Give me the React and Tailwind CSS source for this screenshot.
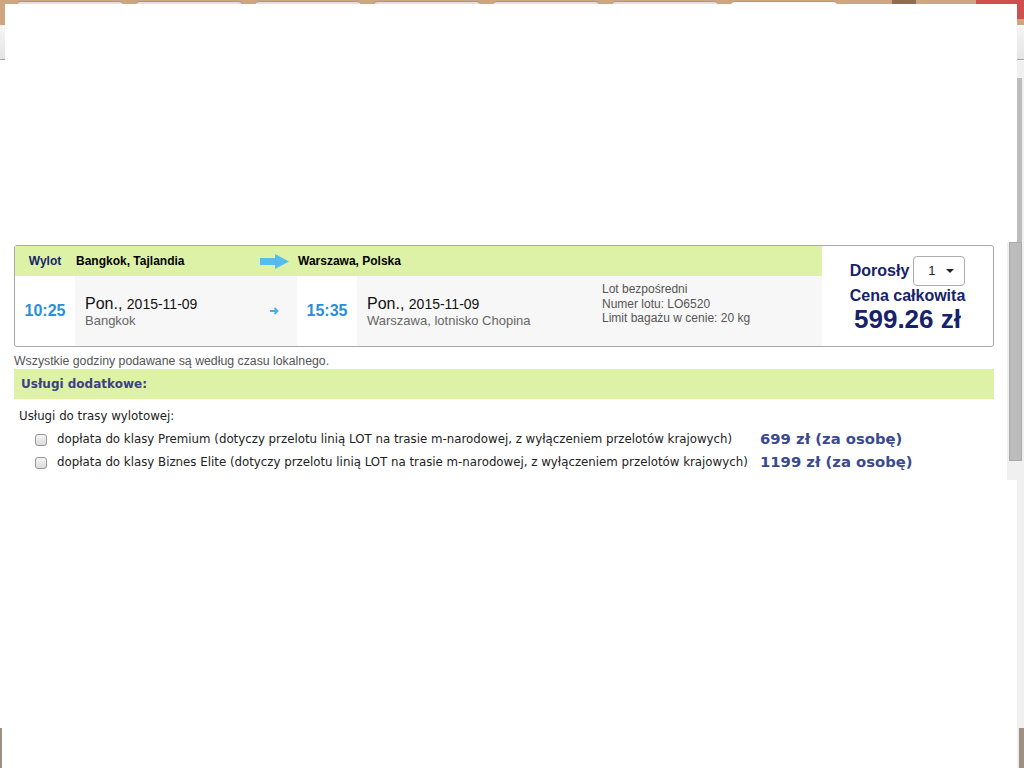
import React from "react";

const navy = "text-[#16236b]";

const tabs = [0, 1, 2, 3, 4, 5, 6];

const extras = [
  {
    label:
      "dopłata do klasy Premium (dotyczy przelotu linią LOT na trasie m-narodowej, z wyłączeniem przelotów krajowych)",
    price: "699 zł (za osobę)",
  },
  {
    label:
      "dopłata do klasy Biznes Elite (dotyczy przelotu linią LOT na trasie m-narodowej, z wyłączeniem przelotów krajowych)",
    price: "1199 zł (za osobę)",
  },
];

const BigArrow = () => (
  <svg width="29" height="15" viewBox="0 0 29 15">
    <path d="M0 4h15V0l14 7.5L15 15v-4H0z" fill="#55bdee" />
  </svg>
);

const SmallArrow = () => (
  <svg width="9" height="8" viewBox="0 0 9 8">
    <path d="M0 4h7M4.5 1l3 3-3 3" stroke="#45b0ea" strokeWidth="1.8" fill="none" />
  </svg>
);

const Browser = () => (
  <>
    {/* window chrome behind the popup */}
    <div className="h-[25px] bg-[#cfa57f] flex relative">
      <div className="flex gap-[9px] pl-[15px] pt-px">
        {tabs.map((t) => (
          <div
            key={t}
            className={
              "w-[110px] h-[26px] rounded-t-[6px] border border-[#a8978a] " +
              (t === 6 ? "bg-white" : "bg-[#e2dfdc]")
            }
          />
        ))}
      </div>
      <div className="absolute left-[892px] top-0 w-[24px] h-[8px] bg-[#8f6d51]" />
      <div className="absolute left-[976px] top-0 w-[48px] h-[19px] bg-[#cf4f4f]" />
    </div>
    <div className="h-[35px] bg-gradient-to-b from-[#f6f6f6] to-[#e4e4e4] border-b border-[#a4a4a4]" />
    <div className="absolute right-0 top-[61px] w-[7px] h-[707px] bg-[#f0f0f0]" />
    <div className="absolute left-[1017px] top-[78px] w-[5px] h-[164px] bg-[#bcbcbc]" />
    <div className="absolute right-0 top-[728px] w-[5px] h-[40px] bg-[#9c8f84]" />
    <div className="absolute left-0 top-[728px] w-[2px] h-[40px] bg-[#9c8f84]" />
  </>
);

const FlightCard = () => (
  <div className="w-[980px] border border-[#a8a8a8] rounded-[3px] flex font-['Liberation_Sans',Arial,sans-serif]">
    <div className="w-[807px] flex flex-col">
      {/* header */}
      <div className="h-[30px] bg-[#ddf2a6] flex items-center text-[12px] font-bold text-black">
        <div className={"w-[60px] text-center " + navy}>Wylot</div>
        <div className="w-[222px] flex items-center justify-between pl-px pr-[8px]">
          <span>Bangkok, Tajlandia</span>
          <BigArrow />
        </div>
        <div className="pl-px">Warszawa, Polska</div>
      </div>
      {/* body */}
      <div className="h-[70px] flex">
        <div className="w-[60px] flex items-center justify-center text-[16px] font-bold text-[#2a8fd9]">
          10:25
        </div>
        <div className="w-[222px] bg-[#f7f7f7] flex items-center justify-between pl-[10px] pr-[18px]">
          <div className="pt-px">
            <div className="leading-[18px] text-[#111]">
              <span className="text-[16px]">Pon.,</span>{" "}
              <span className="text-[14px]">2015-11-09</span>
            </div>
            <div className="leading-[16px] text-[13px] text-[#666]">Bangkok</div>
          </div>
          <SmallArrow />
        </div>
        <div className="w-[60px] flex items-center justify-center text-[16px] font-bold text-[#2a8fd9]">
          15:35
        </div>
        <div className="flex-1 bg-[#f7f7f7] flex pl-[10px]">
          <div className="w-[235px] flex items-center">
            <div className="pt-px">
              <div className="leading-[18px] text-[#111]">
                <span className="text-[16px]">Pon.,</span>{" "}
                <span className="text-[14px]">2015-11-09</span>
              </div>
              <div className="leading-[16px] text-[13px] text-[#666]">
                Warszawa, lotnisko Chopina
              </div>
            </div>
          </div>
          <div className="pt-[6px] text-[12px] leading-[14.5px] text-[#555]">
            <div>Lot bezpośredni</div>
            <div>Numer lotu: LO6520</div>
            <div>Limit bagażu w cenie: 20 kg</div>
          </div>
        </div>
      </div>
    </div>
    {/* price */}
    <div className={"flex-1 flex flex-col items-center pt-[10px] font-bold " + navy}>
      <div className="flex items-center gap-[4px]">
        <span className="text-[16px]">Dorosły</span>
        <div className="w-[52px] h-[30px] border border-[#adadad] rounded-[4px] flex items-center pl-[14px] gap-[10px] text-[13px] font-normal text-[#222]">
          <span>1</span>
          <svg width="8" height="4" viewBox="0 0 8 4">
            <path d="M0 0h8L4 4z" fill="#222" />
          </svg>
        </div>
      </div>
      <div className="text-[16px] leading-[18px] mt-[1px]">Cena całkowita</div>
      <div className="text-[26px] leading-[28px]">599.26 zł</div>
    </div>
  </div>
);

export default function App() {
  return (
    <div className="relative w-[1024px] h-[768px] overflow-hidden bg-white">
      <Browser />
      {/* popup */}
      <div className="absolute left-[5px] top-[4px] w-[1012px] h-[764px] bg-white pl-[9px] pt-[241px]">
        <FlightCard />
        <div className="mt-[7px] text-[12.3px] leading-[14px] text-[#555] font-['Liberation_Sans',Arial,sans-serif]">
          Wszystkie godziny podawane są według czasu lokalnego.
        </div>
        <div className="mt-px w-[980px] h-[30px] bg-[#ddf2a6] flex items-center pl-[7px] text-[12px] font-bold text-[#3c3f86] font-['DejaVu_Sans',Verdana,sans-serif]">
          Usługi dodatkowe:
        </div>
        <div className="font-['DejaVu_Sans',Verdana,sans-serif] text-[#222]">
          <div className="mt-[10px] pl-[5px] text-[11.8px] leading-[14px]">Usługi do trasy wylotowej:</div>
          <div className="mt-[5px]">
            {extras.map((e) => (
              <div key={e.price} className="h-[23px] flex items-center pl-[21px]">
                <span className="w-[12px] h-[12px] rounded-[3px] border border-[#959595] bg-gradient-to-b from-[#f4f4f4] to-[#dcdcdc]" />
                <span className="ml-[10px] w-[703px] text-[11.8px]">{e.label}</span>
                <span className="text-[14.8px] font-bold text-[#3a4a8e]">{e.price}</span>
              </div>
            ))}
          </div>
        </div>
      </div>
      {/* inner scrollbar of the popup */}
      <div className="absolute left-[1007px] top-[242px] w-[10px] h-[238px] bg-[#f0f0f0]" />
      <div className="absolute left-[1009px] top-[242px] w-[13px] h-[219px] bg-[#bcbcbc] border border-[#a9a9a9]" />
    </div>
  );
}
